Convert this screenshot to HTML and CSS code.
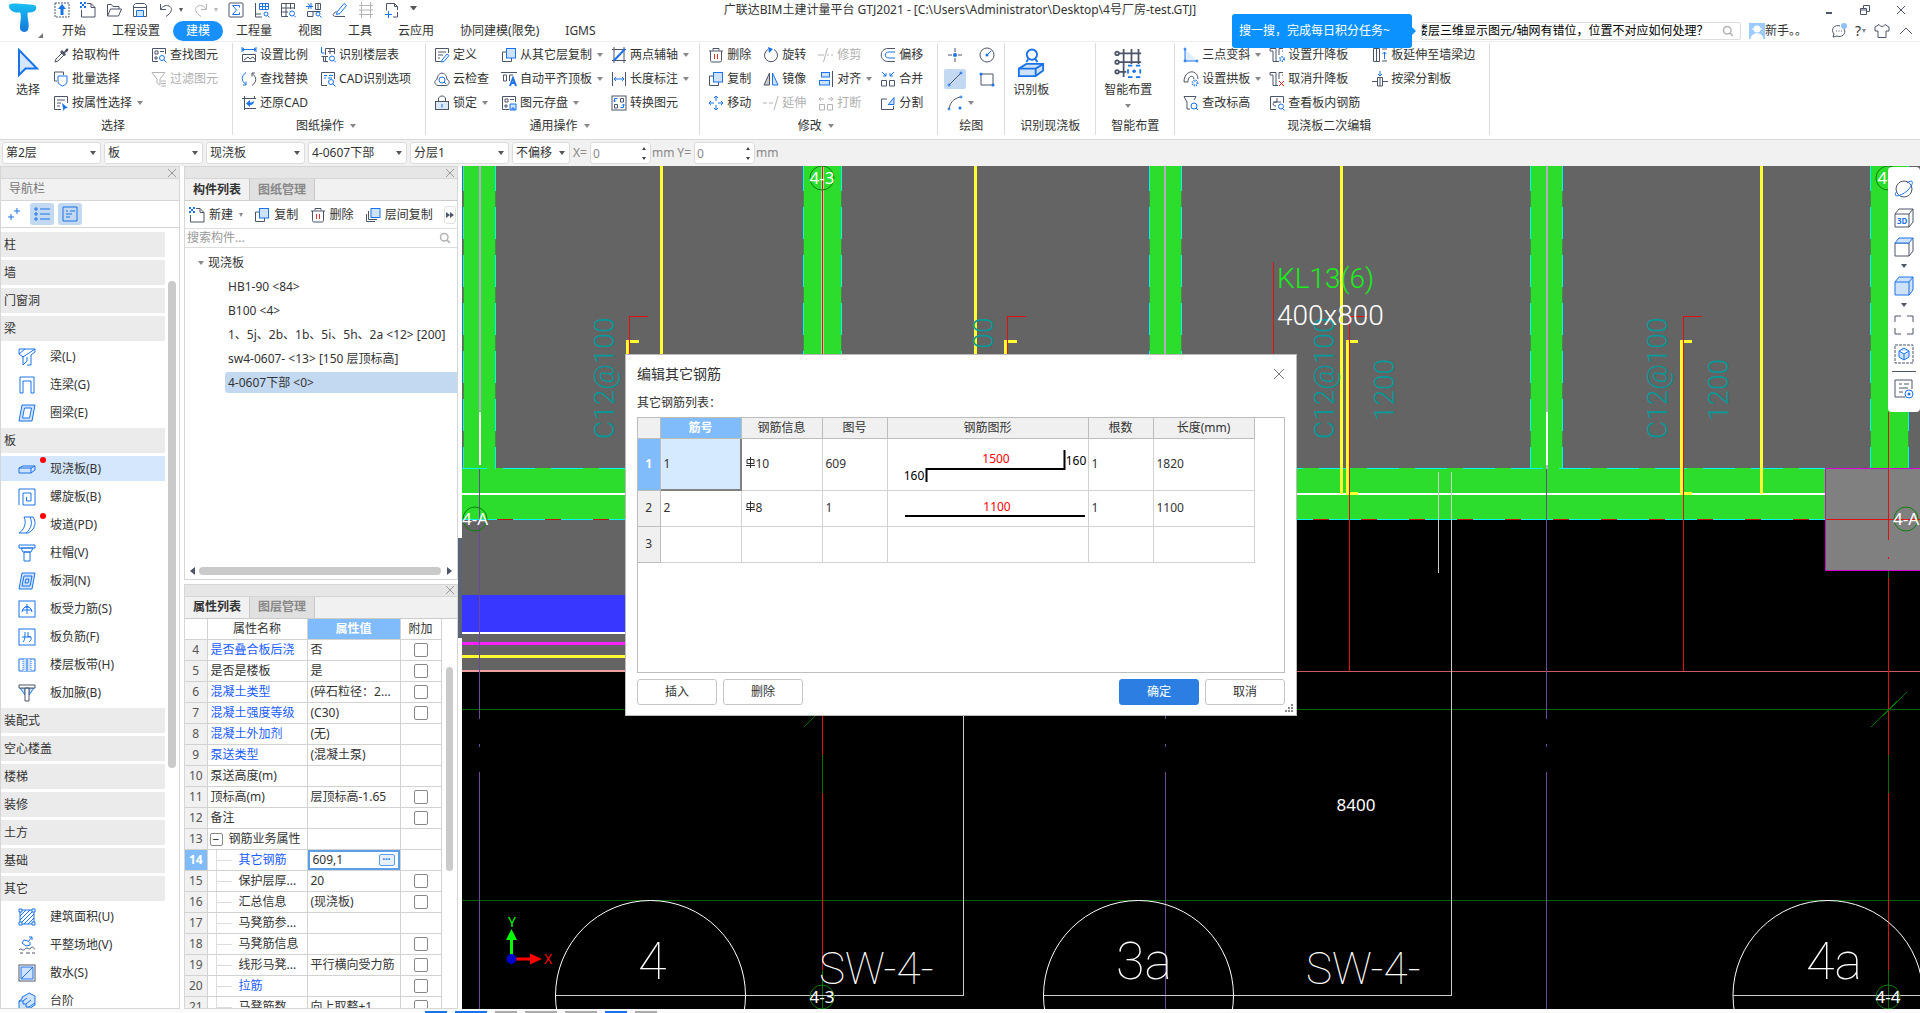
FILE: index.html
```html
<!DOCTYPE html>
<html lang="zh-CN">
<head>
    <meta charset="UTF-8">
    <meta name="viewport" content="width=device-width, initial-scale=1.0">
    <title>广联达BIM土建计量平台 GTJ2021</title>
    <link rel="stylesheet" href="styles.css">
</head>
<body>

<!-- icon sprite -->
<svg class="sprite" aria-hidden="true">
    <symbol id="i-up" viewBox="0 0 16 16"><rect class="k" x="1" y="1" width="14" height="14" stroke-dasharray="2 1"/><path class="bs" d="M8 2l4 5H9.5v6h-3V7H4z"/></symbol>
    <symbol id="i-new" viewBox="0 0 16 16"><path class="k" d="M7 1.5h4l4 4v9.500H1.500V8M11 1.500v4h4"/><path class="bs" d="M0 0h2v2H0zM4 0h2v2H4zM2 2h2v2H2zM0 4h2v2H0zM4 4h2v2H4z"/></symbol>
    <symbol id="i-open" viewBox="0 0 16 16"><path class="k" d="M1.5 14V2.500h4l1.500 2h6V7M1.500 14l3-7h11l-3 7z"/></symbol>
    <symbol id="i-save" viewBox="0 0 16 16"><path class="k" d="M1.5 3.500l2-2h9l2 2v11h-13zM1.500 5.500h13"/><path class="bf" d="M4.5 14.500v-6h7v6z"/></symbol>
    <symbol id="i-undo" viewBox="0 0 16 16"><path class="k" d="M2.5 2v5.500H8M2.500 7.500C5 3.500 9 2.500 12 4.500c2.500 2 2 6-4 10"/></symbol>
    <symbol id="i-redo" viewBox="0 0 16 16"><path class="g" d="M13.5 2v5.500H8M13.500 7.500C11 3.500 7 2.500 4 4.500c-2.500 2-2 6 4 10"/></symbol>
    <symbol id="i-sum" viewBox="0 0 16 16"><rect class="k" x="1" y="1" width="14" height="14" rx="1"/><path class="b" d="M11.5 5.500v-2h-7L8.500 8l-4 4.500h7v-2"/></symbol>
    <symbol id="i-tabq" viewBox="0 0 16 16"><path class="k" d="M1.5 1v14H8M1.500 12H7"/><path class="b" d="M5.5 1.500h9v6h-9zM5.500 4.500h9M8.500 1.500v6M11.500 1.500v6"/><circle class="b" cx="12" cy="12" r="2"/><path class="b" d="M13.5 13.500l2 2"/></symbol>
    <symbol id="i-gridq" viewBox="0 0 16 16"><path class="k" d="M8 14.500H1.500v-13h13V7M1.500 6h13M1.500 10H8M6 1.500v13M10.500 1.500V7"/><circle class="b" cx="12" cy="11.5" r="2.5"/><path class="b" d="M14 13.500l2 2"/></symbol>
    <symbol id="i-floorq" viewBox="0 0 16 16"><path class="k" d="M9.5 1.500h5v6h-5zM1.500 9.500h13M1.500 9.500v5H7v-5M12 1.500v6"/><path class="b" d="M0 4.500h7M2 1.500L4 4 2 7M5 1v6"/><circle class="b" cx="12" cy="12" r="2"/><path class="b" d="M13.5 13.500l2 2"/></symbol>
    <symbol id="i-floor" viewBox="0 0 16 16"><path class="k" d="M5.5 8V1.500h9V7M8 4.500h6.500M10 1.500V7M1.500 9.500H8M3.500 9.500v5H8M5.500 9.500v5"/><path class="b" d="M1.5 0v6h3"/><circle class="b" cx="12" cy="11.5" r="2.5"/><path class="b" d="M14 13.500l2 2"/></symbol>
    <symbol id="i-pen" viewBox="0 0 16 16"><path class="b" d="M5 10l7-8.500 2.500 2L8 11.500 4.500 12.500z"/><path class="k" d="M4.5 9.500C0 12 0 14 4 14.500h9"/></symbol>
    <symbol id="i-frame" viewBox="0 0 16 16"><path class="g" d="M3.5 0v16M12.500 0v16M1 3.500h14M1 8h14M1 12.500h14"/></symbol>
    <symbol id="i-crop" viewBox="0 0 16 16"><path class="k" d="M2.5 1.500h8l3 3V8M2.500 1.500v7M9 15h4.500v-5M10.500 1.500v3h3"/><path class="b" d="M1 12.500h7M4.500 9v7"/></symbol>
    <symbol id="i-pick" viewBox="0 0 16 16"><path class="ks" d="M9 3l2 2 2-3c2-1 3 0 2 2l-3 2 1 2-2 1-4-4z"/><path class="k" d="M9 6l-6 6-1 3 3-1 6-6"/></symbol>
    <symbol id="i-batch" viewBox="0 0 16 16"><path class="k" d="M4 10H1.500v-9h9v3"/><path class="b wf" d="M5 5h9v5c0 3-2 4-4.500 5C7 14 5 13 5 10z"/></symbol>
    <symbol id="i-attr" viewBox="0 0 16 16"><path class="k" d="M8 14.500H1.500v-13h13V8M4 5h8M4 8h4M4 11h3"/><path class="bs" d="M9 8l6 5-3 .5L10.500 16z"/></symbol>
    <symbol id="i-find" viewBox="0 0 16 16"><path class="k" d="M7 14.500H1.500v-13h13V7M4 4h3v3H4zM9 4.500h4M4 10h2v2H4z"/><circle class="b" cx="11" cy="11" r="2.5"/><path class="b" d="M13 13l2.500 2.500"/></symbol>
    <symbol id="i-filter" viewBox="0 0 16 16"><path class="g" d="M1 1.500h13L9 8v6l-3-2V8zM10 10h5M10 12.500h5M10 15h5"/></symbol>
    <symbol id="i-scale" viewBox="0 0 16 16"><path class="b" d="M1 0v5M15 0v5M1 2.500h14M3 1L1 2.500 3 4M13 1l2 1.500L13 4"/><path class="k" d="M1.5 7.500h13v7h-13zM3 13l4-3 2 2 3-2 2.500 3"/></symbol>
    <symbol id="i-cad" viewBox="0 0 16 16"><path class="k" d="M7 14.500H1.500v-13h13V8"/><path class="b" d="M4 4.500h3M9 4.500h4M4 7h2M8 7h4"/><circle class="b" cx="11" cy="11" r="2.5"/><path class="b" d="M13 13l2.500 2.500"/></symbol>
    <symbol id="i-swap" viewBox="0 0 16 16"><path class="b" d="M5 1.500C0 5 0 10 5 13.500M5 14V10.500M5 14H2"/><path class="k" d="M11 14.500c5-3.500 5-8.500 0-12M11 2v3.500M11 2h3"/></symbol>
    <symbol id="i-restore" viewBox="0 0 16 16"><path class="k" d="M1 3.500h14M3.500 1v14M3.500 13.500H15M13.500 1v3"/><path class="bs" d="M5 8.500L9 5v2.500c2 0 3-.5 4-2 0 3-1.500 4.500-4 4.500v2z"/></symbol>
    <symbol id="i-define" viewBox="0 0 16 16"><path class="k" d="M7 14.500H1.500v-13h13V6M4 5h8M4 8h5M4 11h2"/><path class="b" d="M8 13l5-6 2 1.500-5 6-2.500.5z"/></symbol>
    <symbol id="i-cloud" viewBox="0 0 16 16"><path class="k" d="M4 14.500C0 14 0 9 3 8.500 3.500 0 12.500 0 13 8.500c3 .5 3 5.500-1 6z"/><circle class="b" cx="8" cy="9" r="3"/><path class="b" d="M10 11l2 2"/></symbol>
    <symbol id="i-lock" viewBox="0 0 16 16"><path class="k" d="M4.5 7V4c0-4 7-4 7 0v3"/><rect class="k lf" x="1.5" y="6.5" width="13" height="8"/><path class="b" d="M8 9v3.500"/></symbol>
    <symbol id="i-copy" viewBox="0 0 16 16"><path class="k" d="M5 5H1.500v9.500h9V11"/><rect class="bf" x="5.5" y="1.5" width="9" height="9.5"/></symbol>
    <symbol id="i-layers" viewBox="0 0 16 16"><path class="k" d="M1.5 7v7.500H10M3.500 4v8.500H12"/><rect class="bf" x="6" y="1.5" width="9" height="9"/></symbol>
    <symbol id="i-top" viewBox="0 0 16 16"><path class="k" d="M0 1.500h16M2.500 4v6h3V4zM12 4H8.500v6"/><path class="b thick" d="M9 15l3-8 3 8M10 12h4"/></symbol>
    <symbol id="i-store" viewBox="0 0 16 16"><path class="k" d="M8 14.500H1.500v-13h13V7M4 4h3v3H4zM9 4.500h4M4 10h2v2H4z"/><path class="bf" d="M9 9h6v6H9zM11 15v-2h2v2"/></symbol>
    <symbol id="i-axis" viewBox="0 0 16 16"><path class="k" d="M1 2.500h14M1 13.500h14M3 0v16M13 0v16"/><path class="b thick" d="M3 13.500L14 2"/></symbol>
    <symbol id="i-dim" viewBox="0 0 16 16"><path class="k" d="M1.5 1v14M14.500 1v14"/><path class="b" d="M3 8h10M5 6L3 8l2 2M11 6l2 2-2 2"/></symbol>
    <symbol id="i-conv" viewBox="0 0 16 16"><rect class="k" x="1" y="1" width="14" height="14"/><path class="k" d="M9.5 3.500h3V7h-3zM3.500 9.500h3V13h-3z"/><path class="b" d="M6.5 3.500h-3v3M2.500 5.500l1 1.500 1.500-1.500M9.500 12.500h3v-3M11 10.500l1.500-1.500L14 10.500"/></symbol>
    <symbol id="i-del" viewBox="0 0 16 16"><path class="k" d="M1 4h14M5 3.500V1.500h6v2M2.500 4v9.500c0 1 .5 1.500 1.500 1.500h8c1 0 1.500-.5 1.500-1.500V4"/><path d="M6.5 7v5M9.500 7v5" fill="none" stroke="#d33"/></symbol>
    <symbol id="i-rot" viewBox="0 0 16 16"><path class="k" d="M11 2.500A6.500 6.500 0 1 1 5 2.500"/><path class="bs" d="M5 0l5 2-4 4z"/></symbol>
    <symbol id="i-mirror" viewBox="0 0 16 16"><path class="k" d="M6.5 2v12H1z" style="fill:#ccc"/><path class="bf" d="M9.5 2v12H15z"/></symbol>
    <symbol id="i-trim" viewBox="0 0 16 16"><path class="g" d="M0 8h6M9 8h2M13 8h2M9.500 1l-4 14"/></symbol>
    <symbol id="i-extend" viewBox="0 0 16 16"><path class="g" d="M0 8h4M6 8h4M15 1l-4 14"/></symbol>
    <symbol id="i-offset" viewBox="0 0 16 16"><path class="k" d="M15 1.500H8C-1 1.500-1 14.500 8 14.500h7"/><path class="b" d="M15 5H9C4 5 4 11 9 11h6"/></symbol>
    <symbol id="i-align" viewBox="0 0 16 16"><path class="k" d="M14.5 0v16"/><rect class="bf" x="3.5" y="1.5" width="8" height="4.5"/><rect class="bf" x="1.5" y="9.5" width="10" height="4.5"/></symbol>
    <symbol id="i-merge" viewBox="0 0 16 16"><path class="k" d="M1.5 9.500h5V15h-5zM9.500 9.500h5V15h-5z"/><path class="b" d="M2 1l4 4M3 5h3V2M14 1l-4 4M13 5h-3V2"/></symbol>
    <symbol id="i-break" viewBox="0 0 16 16"><path class="g" d="M1.5 9.500h5V15h-5zM9.500 9.500h5V15h-5zM1 4h5M3 2L1 4l2 2M15 4h-5M13 2l2 2-2 2"/></symbol>
    <symbol id="i-move" viewBox="0 0 16 16"><path class="b" d="M8 1v5M8 10v5M1 8h5M10 8h5M6 3l2-2 2 2M6 13l2 2 2-2M3 6L1 8l2 2M13 6l2 2-2 2"/></symbol>
    <symbol id="i-split" viewBox="0 0 16 16"><path class="k" d="M7 4H1.500v10.500h12V11"/><path class="bf" d="M8 10l6-7.500v7H8.500z"/></symbol>
    <symbol id="i-point" viewBox="0 0 16 16"><path class="k" d="M8 1v4M8 11v4M1 8h4M11 8h4"/><circle class="bs" cx="8" cy="8" r="2"/></symbol>
    <symbol id="i-circle" viewBox="0 0 16 16"><circle class="k" cx="8" cy="8" r="7"/><path class="b" d="M8 8l4-4"/><circle class="bs" cx="8" cy="8" r="1.5"/></symbol>
    <symbol id="i-line" viewBox="0 0 16 16"><path class="k" d="M2 14L14 2"/><circle class="b" cx="2" cy="14" r="1"/><circle class="b" cx="14" cy="2" r="1"/></symbol>
    <symbol id="i-rect" viewBox="0 0 16 16"><path class="k" d="M2 3h12v11H2z"/><circle class="bs" cx="2" cy="3" r="1.5"/><circle class="bs" cx="14" cy="14" r="1.5"/></symbol>
    <symbol id="i-arc" viewBox="0 0 16 16"><path class="k" d="M2 14C3 8 6 4 13 2"/><circle class="b" cx="2" cy="14" r="1"/><circle class="b" cx="14" cy="2" r="1"/><circle class="bs" cx="13" cy="13" r="1.5"/></symbol>
    <symbol id="i-slab" viewBox="0 0 30 32"><path d="M2 22l8-5h18v7l-8 6H2zM2 22h18v8M20 22l8-5" fill="#cfe2fb" stroke="#1a73e8" stroke-width="2"/><circle cx="16" cy="7" r="5.5" fill="none" stroke="#1a73e8" stroke-width="2"/><path d="M12 12l-2 3M19 11l3 4" stroke="#1a73e8" stroke-width="2"/></symbol>
    <symbol id="i-smart" viewBox="0 0 32 34"><path d="M4 6h27M4 16h27M4 27h10M11 1v32M20 1v17M28 1v17" fill="none" stroke="#4c5468" stroke-width="2"/><g fill="#fff" stroke="#4c5468" stroke-width="2"><circle cx="3.5" cy="6" r="2"/><circle cx="3.5" cy="16" r="2"/><circle cx="3.5" cy="27" r="2"/></g><rect x="16" y="20" width="14" height="13" fill="#fff" stroke="#1a73e8" stroke-width="2" stroke-dasharray="5 4"/><circle cx="23" cy="26.5" r="2" fill="#1a73e8"/></symbol>
    <symbol id="i-cursor" viewBox="0 0 24 30"><path d="M3 2v25l6.500-6.500H21z" fill="#d5e6fb" stroke="#1a73e8" stroke-width="2"/></symbol>
    <symbol id="i-slope" viewBox="0 0 16 16"><path d="M2 2v12h12z" fill="#e0edfc"/><path class="b" d="M2 2v12h12"/><circle class="b" cx="2" cy="2" r="1"/><circle class="b" cx="2" cy="14" r="1"/><circle class="b" cx="14" cy="14" r="1"/></symbol>
    <symbol id="i-arch" viewBox="0 0 16 16"><path class="k" d="M1 11C1-2 15-2 15 8M5 11c0-7 6-7 6-3M1 11h4"/><circle class="b thick" cx="12" cy="12" r="2.5" stroke-dasharray="1 1"/></symbol>
    <symbol id="i-elev" viewBox="0 0 16 16"><path class="k" d="M1 1.500h12L11 5M1 1.500L4 7v7h3"/><circle class="b" cx="11" cy="11" r="3"/><path class="b" d="M13 13l2 2"/></symbol>
    <symbol id="i-lift" viewBox="0 0 16 16"><path class="k" d="M1 1.500h6v13M4 4v10.500h6M1 1.500V4h3M14 1.500h-4V8M14 4h-1"/><circle class="b thick" cx="13" cy="12" r="2" stroke-dasharray="1 1"/></symbol>
    <symbol id="i-unlift" viewBox="0 0 16 16"><path class="k" d="M1 1.500h6v13M4 4v10.500h5M1 1.500V4h3M14 1.500h-4V8M14 4h-1"/><path d="M10 10l5 5M15 10l-5 5" stroke="#d22"/></symbol>
    <symbol id="i-rebar" viewBox="0 0 16 16"><path class="k" d="M7 14.500H1.500v-13h13V8M8 3v4M4 7h8M8 7c-5 0-5 4-1 4"/><circle class="b" cx="12" cy="11.5" r="2.5"/><path class="b" d="M13.5 13.500l2 2"/></symbol>
    <symbol id="i-reach" viewBox="0 0 16 16"><path class="k" d="M1.5 1.500h6v13h-6zM4.500 1.500v13M10 2h5M10 14h5"/><path class="b" d="M12.5 5v7M10.500 7l2-2 2 2"/></symbol>
    <symbol id="i-cut" viewBox="0 0 16 16"><path class="b" d="M8 0v5M6 3l2 2 2-2"/><path class="k" d="M5.5 6.500h5V15h-5zM8 6.500V15M0 10.500h5M11 10.500h5"/></symbol>
    <symbol id="i-mag" viewBox="0 0 16 16"><circle class="g thick" cx="7" cy="7" r="5"/><path class="g thick" d="M10.500 10.500l4 4"/></symbol>
    <symbol id="i-chat" viewBox="0 0 16 16"><path class="k" d="M13 6c3 5-3 9-7 7l-4 1 1-3C-1 6 4 1 9 3M5 8h1M7.500 8h1M10 8h1"/><circle cx="13" cy="3" r="3" fill="#8fc0fa"/></symbol>
    <symbol id="i-shirt" viewBox="0 0 16 16"><path class="k" d="M5 1.500L1 4v4h3v6.500h8V8h3V4l-4-2.500C10 4 6 4 5 1.500z"/></symbol>
    <symbol id="i-x" viewBox="0 0 12 12"><path d="M2 2l8 8M10 2l-8 8" fill="none" stroke="#999"/></symbol>
    <symbol id="i-list" viewBox="0 0 16 16"><path class="b" d="M6 3h10M6 8h10M6 13h10M1 2h2v2H1zM1 7h2v2H1zM1 12h2v2H1z"/></symbol>
    <symbol id="i-card" viewBox="0 0 16 16"><path class="b" d="M1 1h14v14H1zM4 5h2M8 5h5M4 8h6M4 11h4"/></symbol>
    <symbol id="i-plus" viewBox="0 0 16 16"><path class="b" d="M11 2v6M8 5h6M5 8v6M2 11h6"/></symbol>
    <!-- navigation icons -->
    <symbol id="n-beam" viewBox="0 0 18 18"><path class="b" d="M1 1h16v3l-4 3v10H9M1 1v5l4 3M5 8v9l4-4V9M1 6l6-5M5 9l12-8"/></symbol>
    <symbol id="n-link" viewBox="0 0 18 18"><path class="b" d="M2 17V1h14v16h-3V5H5v12z"/></symbol>
    <symbol id="n-ring" viewBox="0 0 18 18"><path class="bf" d="M4 1h13l-3 16H1z"/><path class="b wf" d="M6.5 4h7l-2 10h-7z"/></symbol>
    <symbol id="n-slab" viewBox="0 0 18 18"><path class="bf" d="M1 8l4-2h12v4l-4 3H1zM1 8h12v5M13 8l4-2"/></symbol>
    <symbol id="n-spiral" viewBox="0 0 18 18"><path class="b" d="M1 17V1h16v16H5V5h8v8H8.500V9"/></symbol>
    <symbol id="n-ramp" viewBox="0 0 18 18"><path class="b" d="M6 1c3 6 0 13-5 16h9c7-3 9-11 5-16zM12 1c3 6 1 12-4 16"/></symbol>
    <symbol id="n-cap" viewBox="0 0 18 18"><path class="b" d="M1 1h16v3H1zM3 4h12l-2 4H5zM6 8h6v9H6z"/></symbol>
    <symbol id="n-hole" viewBox="0 0 18 18"><path class="bf" d="M4 1h13l-3 16H1z"/><path class="b" d="M6 4h8l-2 10H4zM8 7h3l-1 4H7z"/></symbol>
    <symbol id="n-force" viewBox="0 0 18 18"><rect class="b" x="1" y="1" width="16" height="16"/><path class="b" d="M4 12c1-7 9-7 10 0M4 10h10M9 4v10M7 7h4"/></symbol>
    <symbol id="n-neg" viewBox="0 0 18 18"><rect class="b" x="1" y="1" width="16" height="16"/><path class="b" d="M4 9h9M7 4v3c0 4-1 6-2 7M10 4v5c3-2 5 2 1 5"/></symbol>
    <symbol id="n-band" viewBox="0 0 18 18"><path class="b" d="M1 3h16v12H1z"/><path d="M5 3h8v12H5z" fill="#cfe2fb"/><path class="b" d="M5 3v12M13 3v12" stroke-dasharray="1 1"/><path class="b" d="M9 3v12"/></symbol>
    <symbol id="n-haunch" viewBox="0 0 18 18"><path class="bf" d="M2 4l5 7V4zM16 4l-5 7V4z"/><path class="k wf" d="M1 1h16v3H1zM7 4h4v13H7z"/></symbol>
    <symbol id="n-area" viewBox="0 0 18 18"><path class="b" d="M2 2h14v14H2zM2 8l6-6M2 12L12 2M2 16L16 2M6 16L16 6M10 16l6-6"/><path class="b wf" d="M1 1h3v3H1zM14 1h3v3h-3zM1 14h3v3H1zM14 14h3v3h-3z"/></symbol>
    <symbol id="n-level" viewBox="0 0 18 18"><path class="b" d="M14 1l-4 5M11 1h3v3M10 5L6 4 4 7l4 3 4-1V6"/><path class="k" d="M1 14c2-3 4 2 6-1s4 2 6-1 2 1 4 1M2 17h3M8 17h4M14 17h3"/></symbol>
    <symbol id="n-apron" viewBox="0 0 18 18"><rect class="k" x="1" y="1" width="16" height="16"/><path class="bf" d="M3 3h12v12H3z"/><path class="b" d="M3 15L15 3"/></symbol>
    <symbol id="n-step" viewBox="0 0 18 18"><path class="bf" d="M1 9l3-2V5l4-2 3-2 6 3v9l-6 4H1z"/><path class="b" d="M1 9h4v3h3v3h3v2M5 9l4-3M8 12l5-4M11 15l6-4"/></symbol>
    <!-- view icons -->
    <symbol id="v-orbit" viewBox="0 0 20 20"><circle class="k" cx="10" cy="10" r="8"/><path class="b" d="M3 12c-6 8 5 5 11-1s6-12-1-7"/></symbol>
    <symbol id="v-box" viewBox="0 0 20 20"><path class="k" d="M1 6h14v13H1zM1 6l4-5h14l-4 5M19 1v13l-4 5"/></symbol>
    <symbol id="v-boxtop" viewBox="0 0 20 20"><path class="k" d="M1 6h14v13H1zM19 1v13l-4 5"/><path class="bf" d="M1 6l4-5h14l-4 5z"/></symbol>
    <symbol id="v-boxfill" viewBox="0 0 20 20"><path class="bf" d="M1 6l4-5h14v13l-4 5H1zM1 6h14v13M15 6l4-5"/></symbol>
    <symbol id="v-full" viewBox="0 0 20 20"><path class="k" d="M1 7V1h6M13 1h6v6M19 13v6h-6M7 19H1v-6"/></symbol>
    <symbol id="v-local" viewBox="0 0 20 20"><rect class="k" x="1" y="1" width="18" height="18" stroke-dasharray="3 1"/><path class="bf" d="M10 4l5 3v6l-5 3-5-3V7zM5 7l5 3 5-3M10 10v6"/></symbol>
    <symbol id="v-set" viewBox="0 0 20 20"><path class="k" d="M11 18H1V1h17v9M5 5h3M10 5h5M5 9h9M5 13h4"/><circle class="b" cx="15" cy="15" r="4"/><circle class="bs" cx="15" cy="15" r="1.5"/></symbol>
</svg>

<header class="header">
    <div class="logo">
        <svg viewBox="0 0 32 32"><defs><linearGradient id="lg" x1="0" y1="0" x2="0" y2="1"><stop offset="0" stop-color="#19c0f5"/><stop offset="1" stop-color="#1677d8"/></linearGradient></defs><path d="M1 4C0 0 5 0 16 1s15 0 14 5c-1 4-6 4-9 4-1 6 3 14 0 19-2 3-7 2-8-1-1-6 2-12 0-18C8 11 2 9 1 4z" fill="url(#lg)"/></svg>
        <i class="corner"></i>
    </div>
    <div class="titlebar">
        <div class="quick">
            <button title="上传"><svg><use href="#i-up"/></svg></button>
            <button title="新建"><svg><use href="#i-new"/></svg></button>
            <button title="打开"><svg><use href="#i-open"/></svg></button>
            <button title="保存"><svg><use href="#i-save"/></svg></button>
            <button title="撤销"><svg><use href="#i-undo"/></svg></button><i class="caret pull"></i>
            <button title="恢复"><svg><use href="#i-redo"/></svg></button><i class="caret pull light"></i>
            <button title="汇总计算"><svg><use href="#i-sum"/></svg></button>
            <button title="查看工程量"><svg><use href="#i-tabq"/></svg></button>
            <button title="查看报表"><svg><use href="#i-gridq"/></svg></button>
            <button title="查看计算式"><svg><use href="#i-floorq"/></svg></button>
            <button title="编辑"><svg><use href="#i-pen"/></svg></button>
            <button title="钢筋"><svg><use href="#i-frame"/></svg></button>
            <button title="裁剪"><svg><use href="#i-crop"/></svg></button>
            <i class="caret bar"></i>
        </div>
        <h1 class="title">广联达BIM土建计量平台 GTJ2021 - [C:\Users\Administrator\Desktop\4号厂房-test.GTJ]</h1>
        <div class="win">
            <button title="最小化"><svg viewBox="0 0 12 12"><path class="k thick" d="M3 9h6"/></svg></button>
            <button title="还原"><svg viewBox="0 0 12 12"><path class="k" d="M1.5 4.500h6v6h-6zM4.500 4V1.500h6v6H8M1.500 6h6"/></svg></button>
            <button title="关闭"><svg viewBox="0 0 12 12"><path class="k" d="M2 2l8 8M10 2l-8 8"/></svg></button>
        </div>
    </div>
    <nav class="tabs">
        <a href="#">开始</a><a href="#">工程设置</a><a href="#" class="on">建模</a><a href="#">工程量</a><a href="#">视图</a><a href="#">工具</a><a href="#">云应用</a><a href="#">协同建模(限免)</a><a href="#">IGMS</a>
        <div class="account">
            <div class="ask">
                <div class="bubble">搜一搜，完成每日积分任务~</div>
                <input type="text" aria-label="搜一搜" value="楼层三维显示图元/轴网有错位，位置不对应如何处理？">
                <svg class="mag"><use href="#i-mag"/></svg>
            </div>
            <a href="#" class="user"><svg viewBox="0 0 16 16"><path d="M0 0h16v16H0z" fill="#9ccbff"/><circle cx="8" cy="6" r="3.5" fill="#fff"/><path d="M3 6h10M2 16c0-7 12-7 12 0z" fill="#fff" stroke="#fff"/></svg>新手。。</a>
            <button title="消息"><svg><use href="#i-chat"/></svg></button>
            <button title="帮助" class="help">?<i class="caret"></i></button>
            <button title="皮肤"><svg><use href="#i-shirt"/></svg></button>
            <button title="收起"><svg viewBox="0 0 16 16"><path class="k" d="M2 11l6-6 6 6"/></svg></button>
        </div>
    </nav>
</header>

<div class="ribbon">
    <section class="group">
        <div class="tools">
            <button class="big narrow"><svg><use href="#i-cursor"/></svg>选择</button>
            <div class="grid">
                <button><svg><use href="#i-pick"/></svg>拾取构件</button>
                <button><svg><use href="#i-batch"/></svg>批量选择</button>
                <button><svg><use href="#i-attr"/></svg>按属性选择<i class="caret"></i></button>
                <button><svg><use href="#i-find"/></svg>查找图元</button>
                <button disabled><svg><use href="#i-filter"/></svg>过滤图元</button>
            </div>
        </div>
        <div class="name">选择</div>
    </section>
    <section class="group">
        <div class="grid">
            <button><svg><use href="#i-scale"/></svg>设置比例</button>
            <button><svg><use href="#i-swap"/></svg>查找替换</button>
            <button><svg><use href="#i-restore"/></svg>还原CAD</button>
            <button><svg><use href="#i-floor"/></svg>识别楼层表</button>
            <button><svg><use href="#i-cad"/></svg>CAD识别选项</button>
        </div>
        <div class="name">图纸操作<i class="caret"></i></div>
    </section>
    <section class="group">
        <div class="grid">
            <button><svg><use href="#i-define"/></svg>定义</button>
            <button><svg><use href="#i-cloud"/></svg>云检查</button>
            <button><svg><use href="#i-lock"/></svg>锁定<i class="caret"></i></button>
            <button><svg><use href="#i-copy"/></svg>从其它层复制<i class="caret"></i></button>
            <button><svg><use href="#i-top"/></svg>自动平齐顶板<i class="caret"></i></button>
            <button><svg><use href="#i-store"/></svg>图元存盘<i class="caret"></i></button>
            <button><svg><use href="#i-axis"/></svg>两点辅轴<i class="caret"></i></button>
            <button><svg><use href="#i-dim"/></svg>长度标注<i class="caret"></i></button>
            <button><svg><use href="#i-conv"/></svg>转换图元</button>
        </div>
        <div class="name">通用操作<i class="caret"></i></div>
    </section>
    <section class="group">
        <div class="grid">
            <button><svg><use href="#i-del"/></svg>删除</button>
            <button><svg><use href="#i-copy"/></svg>复制</button>
            <button><svg><use href="#i-move"/></svg>移动</button>
            <button><svg><use href="#i-rot"/></svg>旋转</button>
            <button><svg><use href="#i-mirror"/></svg>镜像</button>
            <button disabled><svg><use href="#i-extend"/></svg>延伸</button>
            <button disabled><svg><use href="#i-trim"/></svg>修剪</button>
            <button><svg><use href="#i-align"/></svg>对齐<i class="caret"></i></button>
            <button disabled><svg><use href="#i-break"/></svg>打断</button>
            <button><svg><use href="#i-offset"/></svg>偏移</button>
            <button><svg><use href="#i-merge"/></svg>合并</button>
            <button><svg><use href="#i-split"/></svg>分割</button>
        </div>
        <div class="name">修改<i class="caret"></i></div>
    </section>
    <section class="group draw">
        <div class="grid">
            <button title="点"><svg><use href="#i-point"/></svg></button>
            <button title="直线" class="on"><svg><use href="#i-line"/></svg></button>
            <button title="弧"><svg><use href="#i-arc"/></svg><i class="caret"></i></button>
            <button title="圆"><svg><use href="#i-circle"/></svg></button>
            <button title="矩形"><svg><use href="#i-rect"/></svg></button>
        </div>
        <div class="name">绘图</div>
    </section>
    <section class="group wide">
        <div class="tools"><button class="big"><svg><use href="#i-slab"/></svg>识别板</button></div>
        <div class="name">识别现浇板</div>
    </section>
    <section class="group wide">
        <div class="tools"><button class="big"><svg><use href="#i-smart"/></svg>智能布置<i class="caret"></i></button></div>
        <div class="name">智能布置</div>
    </section>
    <section class="group">
        <div class="grid">
            <button><svg><use href="#i-slope"/></svg>三点变斜<i class="caret"></i></button>
            <button><svg><use href="#i-arch"/></svg>设置拱板<i class="caret"></i></button>
            <button><svg><use href="#i-elev"/></svg>查改标高</button>
            <button><svg><use href="#i-lift"/></svg>设置升降板</button>
            <button><svg><use href="#i-unlift"/></svg>取消升降板</button>
            <button><svg><use href="#i-rebar"/></svg>查看板内钢筋</button>
            <button><svg><use href="#i-reach"/></svg>板延伸至墙梁边</button>
            <button><svg><use href="#i-cut"/></svg>按梁分割板</button>
        </div>
        <div class="name">现浇板二次编辑</div>
    </section>
</div>

<div class="options">
    <select aria-label="楼层"><option>第2层</option></select>
    <select aria-label="构件大类"><option>板</option></select>
    <select aria-label="构件类型"><option>现浇板</option></select>
    <select aria-label="构件"><option>4-0607下部</option></select>
    <select aria-label="分层"><option>分层1</option></select>
    <select aria-label="偏移" class="short"><option>不偏移</option></select>
    <label>X=<span class="spin"><input type="text" value="0" disabled></span>mm</label>
    <label>Y=<span class="spin"><input type="text" value="0" disabled></span>mm</label>
</div>

<main class="main">
    <aside class="panel nav">
        <div class="strip"><button title="关闭"><svg><use href="#i-x"/></svg></button></div>
        <h2>导航栏</h2>
        <div class="navbar">
            <button title="添加"><svg><use href="#i-plus"/></svg></button>
            <button title="列表" class="on"><svg><use href="#i-list"/></svg></button>
            <button title="卡片" class="on"><svg><use href="#i-card"/></svg></button>
        </div>
        <div class="scroll">
            <ul class="menu">
                <li class="cat">柱</li>
                <li class="cat">墙</li>
                <li class="cat">门窗洞</li>
                <li class="cat">梁</li>
                <li><a href="#"><svg><use href="#n-beam"/></svg>梁(L)</a></li>
                <li><a href="#"><svg><use href="#n-link"/></svg>连梁(G)</a></li>
                <li><a href="#"><svg><use href="#n-ring"/></svg>圈梁(E)</a></li>
                <li class="cat">板</li>
                <li><a href="#" class="on dot"><svg><use href="#n-slab"/></svg>现浇板(B)</a></li>
                <li><a href="#"><svg><use href="#n-spiral"/></svg>螺旋板(B)</a></li>
                <li><a href="#" class="dot"><svg><use href="#n-ramp"/></svg>坡道(PD)</a></li>
                <li><a href="#"><svg><use href="#n-cap"/></svg>柱帽(V)</a></li>
                <li><a href="#"><svg><use href="#n-hole"/></svg>板洞(N)</a></li>
                <li><a href="#"><svg><use href="#n-force"/></svg>板受力筋(S)</a></li>
                <li><a href="#"><svg><use href="#n-neg"/></svg>板负筋(F)</a></li>
                <li><a href="#"><svg><use href="#n-band"/></svg>楼层板带(H)</a></li>
                <li><a href="#"><svg><use href="#n-haunch"/></svg>板加腋(B)</a></li>
                <li class="cat">装配式</li>
                <li class="cat">空心楼盖</li>
                <li class="cat">楼梯</li>
                <li class="cat">装修</li>
                <li class="cat">土方</li>
                <li class="cat">基础</li>
                <li class="cat">其它</li>
                <li><a href="#"><svg><use href="#n-area"/></svg>建筑面积(U)</a></li>
                <li><a href="#"><svg><use href="#n-level"/></svg>平整场地(V)</a></li>
                <li><a href="#"><svg><use href="#n-apron"/></svg>散水(S)</a></li>
                <li><a href="#"><svg><use href="#n-step"/></svg>台阶</a></li>
            </ul>
            <div class="vbar"><i></i></div>
        </div>
    </aside>

    <div class="middle">
        <section class="panel comps">
            <div class="strip"><button title="关闭"><svg><use href="#i-x"/></svg></button></div>
            <div class="ptabs"><button class="on">构件列表</button><button>图纸管理</button></div>
            <div class="ptools">
                <button><svg><use href="#i-new"/></svg>新建<i class="caret"></i></button>
                <button><svg><use href="#i-copy"/></svg>复制</button>
                <button><svg><use href="#i-del"/></svg>删除</button>
                <button><svg><use href="#i-layers"/></svg>层间复制</button>
                <button title="更多" class="more"><svg viewBox="0 0 8 6"><path d="M0 0l4 3-4 3zM4 0l4 3-4 3z" fill="#4c5468"/></svg></button>
            </div>
            <div class="psearch"><input type="text" aria-label="搜索构件" placeholder="搜索构件..."><svg><use href="#i-mag"/></svg></div>
            <div class="tree">
                <div class="root"><i class="caret"></i>现浇板</div>
                <ul>
                    <li>HB1-90 &lt;84&gt;</li>
                    <li>B100 &lt;4&gt;</li>
                    <li>1、5j、2b、1b、5i、5h、2a &lt;12&gt; [200]</li>
                    <li>sw4-0607- &lt;13&gt; [150 层顶标高]</li>
                    <li class="on">4-0607下部 &lt;0&gt;</li>
                </ul>
            </div>
            <div class="hbar"><b class="l"></b><i></i><b class="r"></b></div>
        </section>

        <section class="panel props">
            <div class="strip"><button title="关闭"><svg><use href="#i-x"/></svg></button></div>
            <div class="ptabs"><button class="on">属性列表</button><button>图层管理</button></div>
            <div class="scroll">
                <table class="ptable">
                    <colgroup><col class="c-no"><col class="c-name"><col class="c-val"><col class="c-add"></colgroup>
                    <thead><tr><th></th><th>属性名称</th><th class="on">属性值</th><th>附加</th></tr></thead>
                    <tbody>
                        <tr><th>4</th><td class="link">是否叠合板后浇</td><td>否</td><td><input type="checkbox" aria-label="附加 4"></td></tr>
                        <tr><th>5</th><td>是否是楼板</td><td>是</td><td><input type="checkbox" aria-label="附加 5"></td></tr>
                        <tr><th>6</th><td class="link">混凝土类型</td><td>(碎石粒径：2...</td><td><input type="checkbox" aria-label="附加 6"></td></tr>
                        <tr><th>7</th><td class="link">混凝土强度等级</td><td>(C30)</td><td><input type="checkbox" aria-label="附加 7"></td></tr>
                        <tr><th>8</th><td class="link">混凝土外加剂</td><td>(无)</td><td></td></tr>
                        <tr><th>9</th><td class="link">泵送类型</td><td>(混凝土泵)</td><td></td></tr>
                        <tr><th>10</th><td>泵送高度(m)</td><td></td><td></td></tr>
                        <tr><th>11</th><td>顶标高(m)</td><td>层顶标高-1.65</td><td><input type="checkbox" aria-label="附加 11"></td></tr>
                        <tr><th>12</th><td>备注</td><td></td><td><input type="checkbox" aria-label="附加 12"></td></tr>
                        <tr><th>13</th><td class="fold"><button title="折叠">−</button>钢筋业务属性</td><td></td><td></td></tr>
                        <tr class="on"><th>14</th><td class="sub link">其它钢筋</td><td class="edit"><div><input type="text" aria-label="其它钢筋" value="609,1"><button title="编辑">•••</button></div></td><td></td></tr>
                        <tr><th>15</th><td class="sub">保护层厚...</td><td>20</td><td><input type="checkbox" aria-label="附加 15"></td></tr>
                        <tr><th>16</th><td class="sub">汇总信息</td><td>(现浇板)</td><td><input type="checkbox" aria-label="附加 16"></td></tr>
                        <tr><th>17</th><td class="sub">马凳筋参...</td><td></td><td></td></tr>
                        <tr><th>18</th><td class="sub">马凳筋信息</td><td></td><td><input type="checkbox" aria-label="附加 18"></td></tr>
                        <tr><th>19</th><td class="sub">线形马凳...</td><td>平行横向受力筋</td><td><input type="checkbox" aria-label="附加 19"></td></tr>
                        <tr><th>20</th><td class="sub link">拉筋</td><td></td><td><input type="checkbox" aria-label="附加 20"></td></tr>
                        <tr><th>21</th><td class="sub">马凳筋数...</td><td>向上取整+1</td><td><input type="checkbox" aria-label="附加 21"></td></tr>
                    </tbody>
                </table>
                <div class="vbar"><i></i></div>
            </div>
        </section>
    </div>

    <div class="splitter"><button title="收起"></button></div>

    <div class="stage">
        <svg class="cad" viewBox="462 166 1458 843" preserveAspectRatio="xMinYMin slice" shape-rendering="crispEdges">
            <rect x="462" y="166" width="1458" height="843" fill="#000"/>
            <rect x="462" y="166" width="1458" height="354" fill="#646464"/>
            <rect x="462" y="520" width="500" height="152" fill="#646464"/>
            <!-- beams -->
            <g fill="#2cdd2c">
                <rect x="464" y="166" width="32" height="303"/>
                <rect x="803" y="166" width="39" height="303"/>
                <rect x="1149" y="166" width="32" height="303"/>
                <rect x="1530" y="166" width="32" height="303"/>
                <rect x="1870" y="166" width="38" height="303"/>
                <rect x="462" y="469" width="1363" height="51"/>
            </g>
            <g stroke="#3f8f4f" fill="none">
                <path d="M463.5 166v303M495.500 166v303M803.500 166v303M841.500 166v303M1149.500 166v303M1181.500 166v303M1530.500 166v303M1562.500 166v303M1870.500 166v303M1908.500 166v303"/>
                <path d="M462 468.500H1825" stroke="#2cdd2c"/>
            </g>
            <g stroke="#00f5f5" fill="none" stroke-dasharray="32 16" stroke-dashoffset="7">
                <path d="M463.5 166v303M495.500 166v303M803.500 166v303M841.500 166v303M1149.500 166v303M1181.500 166v303M1530.500 166v303M1562.500 166v303M1870.500 166v303M1908.500 166v303M462 468.500H1825"/>
            </g>
            <path d="M462 519.500H1825" stroke="#00f5f5"/>
            <path d="M497 519.500H1825" stroke="#c01010" stroke-dasharray="16 32"/>
            <path d="M462 494H1825" stroke="#fff" stroke-width="2"/>
            <!-- slab layers at the left -->
            <rect x="462" y="595" width="500" height="37" fill="#3737ff"/>
            <path d="M462 633h500" stroke="#fff" stroke-width="2"/>
            <path d="M462 643.500h500" stroke="#ff20ff" stroke-width="3"/>
            <path d="M462 656.500h500" stroke="#ffff32" stroke-width="3"/>
            <path d="M462 671h163" stroke="#f0a0a0" stroke-width="2"/>
            <path d="M1297 671.500h623" stroke="#cc5c5c"/>
            <path d="M462 709.500h1458M462 900.500h1458" stroke="#006400"/>
            <!-- axes -->
            <g fill="none">
                <path d="M479.5 166v245M1164.500 166v245M1546.500 166v303" stroke="#b9a9c9" stroke-width="2"/>
                <path d="M479.5 412v53M1546.500 412v53" stroke="#fff" stroke-width="2"/>
                <path d="M479.5 469v250M479.500 744v3M479.500 772v237M1165.500 716v3M1165.500 744v3M1165.500 772v237M1546.500 469v250M1546.500 744v3M1546.500 772v237" stroke="#6a4a92"/>
                <path d="M821.5 166v190M823.500 166v190" stroke="#a8d8a0"/>
                <path d="M822.5 166v189M822.500 716v39M822.500 793v177M1888.500 412v58M1888.500 578v177M1888.500 793v177" stroke="#e01010"/>
                <path d="M822.5 755v38M822.500 970v39M1888.500 570v8M1888.500 755v38M1888.500 970v39M804 727l36-35M1871 727l36-35" stroke="#007000"/>
            </g>
            <!-- rebar -->
            <g fill="none" stroke="#ffff32" stroke-width="3">
                <path d="M661.5 166v190M975.500 166v190M1341.500 166v328M1761.500 166v328"/>
                <path d="M639 341.500h-11.500V356M1017 341.500h-11.500V356M1358 341.500h-10.500V493.500H1358M1692 341.500h-10.500V493.500H1692"/>
            </g>
            <path d="M648 316.500h-18.500V356M1026 316.500h-18.500V356M1368 316.500h-18.500V671M1702 316.500h-18.500V671M1273.500 262v94" fill="none" stroke="#e01010"/>
            <path d="M1438.5 472v101M1451.500 472v524M963.500 716v280M555 995.500h408M1043 995.500h408M1733 995.500h187" stroke="#ccc" fill="none"/>
            <rect x="1825.5" y="468.5" width="100" height="102" fill="#808080" stroke="#d000d0"/>
            <path d="M1826 519.500h94M1888.500 469v71M1888.500 557v2" stroke="#e01010"/>
            <g fill="none" stroke="#fff" shape-rendering="auto">
                <circle cx="650.5" cy="995.5" r="95"/>
                <circle cx="1138.5" cy="995.5" r="95"/>
                <circle cx="1828" cy="995.5" r="95"/>
            </g>
            <g fill="none" stroke="#0a800a" shape-rendering="auto">
                <circle cx="822" cy="178" r="12"/><circle cx="1888" cy="178" r="12"/>
                <circle cx="475" cy="519" r="12"/><circle cx="1906" cy="519" r="12"/>
                <circle cx="822" cy="997" r="12"/><circle cx="1888" cy="997" r="12"/>
            </g>
            <g class="mark">
                <text x="822" y="184">4-3</text><text x="1890" y="184">4-4</text>
                <text x="475" y="525">4-A</text><text x="1906" y="525">4-A</text>
                <text x="822" y="1003">4-3</text><text x="1888" y="1003">4-4</text>
                <text x="1356" y="811">8400</text>
            </g>
            <!-- drawing notes -->
            <g class="note teal">
                <text transform="translate(614 439) rotate(-90)">C12@100</text>
                <text transform="translate(993 439) rotate(-90)">C12@100</text>
                <text transform="translate(1334 439) rotate(-90)">C12@100</text>
                <text transform="translate(1667 439) rotate(-90)">C12@100</text>
                <text transform="translate(1394 421) rotate(-90)">1200</text>
                <text transform="translate(1728 421) rotate(-90)">1200</text>
            </g>
            <text class="note beam" x="1277" y="288">KL13(6)</text>
            <text class="note size" x="1277" y="325">400x800</text>
            <g class="note axisno"><text x="638" y="979">4</text><text x="1116" y="979">3a</text><text x="1806" y="979">4a</text></g>
            <g class="note wall"><text x="819" y="984">SW-4-</text><text x="1306" y="984">SW-4-</text></g>
            <!-- ucs -->
            <g shape-rendering="auto">
                <path d="M510 957V940h-4l5.500-11 5.500 11h-4v17z" fill="#0f0"/>
                <path d="M514 957.500h16v-4l12 5.500-12 5.500v-4h-16z" fill="#f00"/>
                <circle cx="511.5" cy="959" r="5" fill="#00c"/>
                <text class="ucs" x="512" y="927" fill="#0f0">Y</text><text class="ucs" x="548" y="964" fill="#f00">X</text>
            </g>
        </svg>

        <div class="views">
            <button title="动态观察"><svg><use href="#v-orbit"/></svg></button>
            <button title="三维" class="td"><svg><use href="#v-box"/></svg><b>3D</b></button>
            <button title="俯视"><svg><use href="#v-boxtop"/></svg></button>
            <i class="caret"></i>
            <button title="实体"><svg><use href="#v-boxfill"/></svg></button>
            <i class="caret"></i>
            <button title="全屏"><svg><use href="#v-full"/></svg></button>
            <button title="局部三维"><svg><use href="#v-local"/></svg></button>
            <hr>
            <button title="显示设置"><svg><use href="#v-set"/></svg></button>
        </div>
    </div>
</main>

<footer class="status"><i class="a"></i><i class="a w"></i><i></i><i class="w"></i><i class="w"></i><i class="a"></i><i></i></footer>

<div class="dialog" role="dialog" aria-labelledby="dlg-title">
    <div class="dhead"><h2 id="dlg-title">编辑其它钢筋</h2><button title="关闭"><svg viewBox="0 0 12 12"><path d="M1 1l10 10M11 1L1 11" stroke="#777" fill="none"/></svg></button></div>
    <p>其它钢筋列表：</p>
    <div class="frame">
        <table class="dtable">
            <colgroup><col class="d-no"><col class="d-id"><col class="d-id"><col class="d-pic"><col class="d-shape"><col class="d-pic"><col class="d-len"></colgroup>
            <thead><tr><th></th><th class="on">筋号</th><th>钢筋信息</th><th>图号</th><th>钢筋图形</th><th>根数</th><th>长度(mm)</th></tr></thead>
            <tbody>
                <tr class="tall"><th class="on">1</th><td class="cur">1</td><td><span class="bar"><svg viewBox="0 0 9 11"><path d="M4.5 0v11M0 8.500h9M1 2.500h7v4H1z" fill="none" stroke="#333"/></svg>10</span></td><td>609</td>
                    <td class="shape"><svg viewBox="0 0 200 51"><path d="M38.5 43V30h138V11" fill="none" stroke="#000" stroke-width="2"/><text x="108" y="24" class="r">1500</text><text x="26" y="41">160</text><text x="188" y="26">160</text></svg></td><td>1</td><td>1820</td></tr>
                <tr><th>2</th><td>2</td><td><span class="bar"><svg viewBox="0 0 9 11"><path d="M4.5 0v11M0 8.500h9M1 2.500h7v4H1z" fill="none" stroke="#333"/></svg>8</span></td><td>1</td>
                    <td class="shape"><svg viewBox="0 0 200 35"><path d="M17 25h180" fill="none" stroke="#000" stroke-width="2"/><text x="109" y="20" class="r">1100</text></svg></td><td>1</td><td>1100</td></tr>
                <tr><th>3</th><td></td><td></td><td></td><td></td><td></td><td></td></tr>
            </tbody>
        </table>
    </div>
    <div class="dfoot"><button>插入</button><button>删除</button><button class="ok">确定</button><button>取消</button></div>
    <svg class="grip" viewBox="0 0 8 8"><path d="M6 0h2v2H6zM3 3h2v2H3zM6 3h2v2H6zM0 6h2v2H0zM3 6h2v2H3zM6 6h2v2H6z" fill="#888"/></svg>
</div>

</body>
</html>
```

FILE: styles.css
```css
* {
    box-sizing: border-box;
}

body {
    margin: 0;
    height: 100vh;
    overflow: hidden;
    display: flex;
    flex-direction: column;
    font-family: "Noto Sans", "Noto Sans CJK SC", sans-serif;
    font-size: 12px;
    line-height: 16px;
    color: #333;
    background: #fff;
}

button, input, select {
    font: inherit;
    color: inherit;
    border: 0;
    padding: 0;
    margin: 0;
    background: none;
}

button {
    display: inline-flex;
    align-items: center;
    justify-content: center;
    white-space: nowrap;
}

a {
    color: inherit;
    text-decoration: none;
}

svg {
    display: block;
    width: 16px;
    height: 16px;
    flex: none;
}

ul, h1, h2, p {
    margin: 0;
    padding: 0;
    font-size: 12px;
    font-weight: normal;
    list-style: none;
}

.sprite {
    position: absolute;
    width: 0;
    height: 0;
}

/* icon strokes */
.k { fill: none; stroke: #4c5468; }
.b { fill: none; stroke: #1a73e8; }
.g { fill: none; stroke: #b4b4b4; }
.bf { fill: #cfe2fb; stroke: #1a73e8; }
.bs { fill: #1a73e8; }
.ks { fill: #4c5468; }
.wf { fill: #fff; }
.lf { fill: #dbe9fb; }
.thick { stroke-width: 2; }

.caret {
    flex: none;
    width: 0;
    height: 0;
    border: 3px solid transparent;
    border-top: 4px solid #888;
    border-bottom: 0;
}

/* ---------- header ---------- */
.header {
    display: grid;
    grid-template-columns: 49px 1fr;
    grid-template-rows: 20px 21px;
    border-bottom: 1px solid #eee;
}

.logo {
    grid-area: 1 / 1 / 3 / 2;
    padding: 3px 0 0 8px;
}

.logo svg {
    width: 30px;
    height: 30px;
}

.corner {
    display: block;
    width: 0;
    margin-left: 30px;
    border-left: 5px solid transparent;
    border-bottom: 5px solid #777;
}

.titlebar {
    grid-area: 1 / 1 / 2 / 3;
    display: grid;
    grid-template-columns: 1fr auto 1fr;
    align-items: center;
}

.quick {
    display: flex;
    align-items: center;
    gap: 10px;
    padding-left: 54px;
}

.quick .caret {
    border-width: 4px 2px 0;
    border-top-color: #555;
}

.quick .pull { margin-left: -5px; }
.quick .light { border-top-color: #bbb; }

.quick .bar {
    width: 7px;
    height: 8px;
    border-width: 4px 3px 0;
}

.win {
    display: flex;
    justify-content: flex-end;
    gap: 24px;
    padding-right: 13px;
}

.win svg {
    width: 12px;
    height: 12px;
}

.tabs {
    grid-area: 2 / 2 / 3 / 3;
    display: flex;
    align-items: center;
}

.tabs > a {
    padding: 2px 13px;
    border-radius: 10px;
    white-space: nowrap;
}

.tabs > .on {
    color: #fff;
    background: #1890ff;
}

.account {
    display: flex;
    align-items: center;
    margin-left: auto;
    padding-right: 6px;
    gap: 8px;
}

.ask {
    position: relative;
    display: flex;
    align-items: center;
    width: 320px;
    height: 18px;
    border: 1px solid #ddd;
    border-radius: 2px;
    color: #000;
}

.ask input {
    flex: 1;
    text-indent: -6px;
}

.ask svg {
    width: 12px;
    height: 12px;
    margin: 0 6px;
}

.bubble {
    position: absolute;
    z-index: 2;
    right: calc(100% + 10px);
    top: -9px;
    width: 180px;
    height: 34px;
    padding-left: 7px;
    line-height: 34px;
    border-radius: 3px;
    white-space: nowrap;
    color: #fff;
    background: #0b92ff;
}

.bubble::after {
    content: "";
    position: absolute;
    left: 100%;
    top: 13px;
    border: 4px solid transparent;
    border-left-color: #0b92ff;
    border-right: 0;
}

.user {
    display: flex;
    width: 74px;
}

.help {
    gap: 1px;
    font-size: 14px;
}

.help .caret {
    border-width: 4px 2px 0;
}

/* ---------- ribbon ---------- */
.ribbon {
    display: flex;
    height: 98px;
    padding: 1px 0 4px;
    border-bottom: 1px solid #d9d9d9;
}

.group {
    display: flex;
    flex-direction: column;
    justify-content: space-between;
    padding: 0 14px 0 8px;
    border-right: 1px solid #dcdcdc;
}

.tools {
    display: flex;
    gap: 5px;
}

.grid {
    display: grid;
    grid-auto-flow: column;
    grid-template-rows: 24px 24px 24px;
    grid-auto-columns: max-content;
    column-gap: 12px;
}

.grid button {
    justify-content: flex-start;
    gap: 3px;
}

.grid .caret {
    margin: 0 -4px 0 2px;
}

button:disabled {
    color: #b0b0b0;
}

.big {
    flex-direction: column;
    justify-content: flex-start;
    gap: 4px;
    padding: 5px 8px 0;
}

.big svg {
    width: 28px;
    height: 30px;
}

.narrow svg {
    width: 24px;
}

.big .caret {
    margin-top: 2px;
}

.name {
    display: flex;
    align-items: center;
    justify-content: center;
    gap: 6px;
    line-height: 18px;
}

.wide {
    padding: 0;
}

.wide .big {
    padding: 5px 8px 0;
}

.wide .name {
    padding: 0 15px;
}

.draw {
    padding: 0 6px;
}

.draw .grid {
    column-gap: 10px;
}

.draw .grid button {
    align-self: center;
    width: 22px;
    height: 20px;
    padding: 0 3px;
    border-radius: 2px;
}

.draw .grid .on {
    background: #c2d9f1;
}

/* ---------- options bar ---------- */
.options {
    display: flex;
    align-items: center;
    gap: 3px;
    height: 26px;
    padding: 0 2px;
    background: #f1f1f1;
}

.options select {
    width: 99px;
    height: 22px;
    padding: 0 3px;
    appearance: none;
    border: 1px solid #dcdcdc;
    border-radius: 3px;
    background: #fff url("data:image/svg+xml,%3Csvg xmlns='http://www.w3.org/2000/svg' width='6' height='4'%3E%3Cpath d='M0 0h6L3 4z' fill='%23555'/%3E%3C/svg%3E") no-repeat right 4px center;
}

.options .short {
    width: 58px;
}

.options label {
    display: flex;
    align-items: center;
    color: #888;
}

.spin {
    position: relative;
    width: 61px;
    height: 22px;
    margin: 0 1px 0 3px;
    border: 1px solid #dcdcdc;
    border-radius: 3px;
    background: #fff;
}

.spin input {
    width: 44px;
    height: 20px;
    padding: 0 2px;
}

.spin::before, .spin::after {
    content: "";
    position: absolute;
    right: 4px;
    top: 4px;
    border: 2px solid transparent;
    border-top: 0;
    border-bottom: 3px solid #444;
}

.spin::after {
    top: 14px;
    border-top: 3px solid #444;
    border-bottom: 0;
}

/* ---------- side panels ---------- */
.main {
    flex: 1;
    min-height: 0;
    display: flex;
}

.panel {
    display: flex;
    flex-direction: column;
    min-height: 0;
    overflow: hidden;
    border: 1px solid #d6d6d6;
}

.strip {
    flex: none;
    display: flex;
    justify-content: flex-end;
    height: 11px;
    padding-right: 1px;
    background: #e6e6e6;
}

.strip svg {
    width: 12px;
    height: 12px;
}

.nav {
    width: 180px;
}

.nav h2 {
    height: 22px;
    padding-left: 8px;
    line-height: 20px;
    border-top: 1px solid #d6d6d6;
    color: #777;
    background: #f1f1f1;
}

.navbar {
    display: flex;
    align-items: center;
    gap: 4px;
    height: 28px;
    padding-left: 1px;
    border-top: 1px solid #d6d6d6;
    border-bottom: 1px solid #d6d6d6;
}

.navbar button {
    width: 24px;
    height: 22px;
    border-radius: 3px;
}

.navbar .on {
    background: #c2d9f1;
}

.scroll {
    flex: 1;
    min-height: 0;
    display: flex;
}

.menu {
    flex: 1;
    padding-top: 4px;
}

.menu li {
    height: 25px;
    margin-bottom: 3px;
    line-height: 25px;
}

.cat {
    padding-left: 3px;
    background: #ebebeb;
}

.menu a {
    position: relative;
    display: flex;
    align-items: center;
    gap: 14px;
    height: 25px;
    padding-left: 17px;
}

.menu svg {
    width: 18px;
    height: 18px;
}

.menu .on {
    background: #d4e7fd;
}

.menu .dot::before {
    content: "";
    position: absolute;
    left: 39px;
    top: 1px;
    width: 6px;
    height: 6px;
    border-radius: 50%;
    background: #f00;
}

.vbar {
    width: 14px;
    padding: 53px 3px 0;
}

.vbar i {
    display: block;
    height: 67%;
    border-radius: 4px;
    background: #cacaca;
}

.middle {
    display: flex;
    flex-direction: column;
    gap: 4px;
    width: 274px;
    margin-left: 4px;
}

.comps {
    flex: 413;
}

.props {
    flex: 425;
}

.ptabs {
    flex: none;
    display: flex;
    height: 23px;
    border-top: 1px solid #d6d6d6;
    border-bottom: 1px solid #ccc;
    background: #f1f1f1;
}

.ptabs button {
    padding: 0 8px;
    border-right: 1px solid #c8c8c8;
    font-weight: bold;
    color: #888;
    background: #e0e0e0;
}

.ptabs .on {
    color: #333;
    background: #f1f1f1;
}

.ptools {
    flex: none;
    display: flex;
    align-items: center;
    justify-content: space-between;
    height: 28px;
    padding: 0 1px 0 4px;
    border-bottom: 1px solid #ddd;
}

.ptools button {
    gap: 4px;
}

.ptools .caret {
    margin-left: 2px;
    border-width: 4px 2px 0;
}

.ptools .more {
    width: 12px;
    height: 18px;
    border: 1px solid #e2e2e2;
    border-radius: 3px;
}

.more svg {
    width: 8px;
    height: 6px;
}

.psearch {
    flex: none;
    display: flex;
    align-items: center;
    height: 19px;
    padding: 0 6px 0 2px;
    border-bottom: 1px solid #ddd;
}

.psearch input {
    flex: 1;
}

.psearch svg {
    width: 12px;
    height: 12px;
}

::placeholder {
    color: #999;
    opacity: 1;
}

.tree {
    flex: 1;
    padding-top: 3px;
    white-space: nowrap;
}

.root {
    display: flex;
    align-items: center;
    gap: 4px;
    height: 23px;
    padding-left: 13px;
}

.tree li {
    height: 21px;
    margin: 2px 0 3px 40px;
    padding-left: 3px;
    line-height: 21px;
}

.tree .on {
    border-radius: 3px 0 0 3px;
    background: #c2d9f1;
}

.hbar {
    display: flex;
    align-items: center;
    gap: 4px;
    height: 16px;
    padding: 0 5px;
}

.hbar i {
    flex: 1;
    height: 8px;
    margin-right: 2px;
    border-radius: 4px;
    background: #cacaca;
}

.hbar b {
    border: 4px solid transparent;
    border-left: 0;
    border-right: 5px solid #4c5468;
}

.hbar .r {
    border-right: 0;
    border-left: 5px solid #4c5468;
}

.ptable {
    width: 256px;
    table-layout: fixed;
    border-collapse: collapse;
    align-self: flex-start;
}

.c-no { width: 22px; }
.c-name { width: 100px; }
.c-val { width: 93px; }
.c-add { width: 41px; }

.ptable th, .ptable td {
    height: 21px;
    padding: 0 3px;
    border: 1px solid #d2d2d2;
    border-left: 0;
    border-top: 0;
    font-weight: normal;
    text-align: left;
    white-space: nowrap;
}

.ptable th {
    padding: 0;
    text-align: center;
}

.ptable tbody th {
    color: #555;
    background: #f1f1f1;
}

.ptable th.on, .ptable .on th {
    font-weight: bold;
    color: #fff;
    background: #80bbfb;
}

.ptable td:last-child {
    text-align: center;
}

.ptable .link {
    color: #1a5cff;
}

.ptable [type=checkbox] {
    display: block;
    width: 14px;
    height: 14px;
    margin: 0 auto;
    appearance: none;
    border: 1px solid #888;
    border-radius: 2px;
    background: #fff;
}

.fold button {
    width: 13px;
    height: 13px;
    margin: 0 6px 0 -1px;
    line-height: 11px;
    border: 1px solid #888;
    border-radius: 2px;
    vertical-align: middle;
}

.ptable .sub {
    padding-left: 31px;
    background:
        linear-gradient(#ddd, #ddd) 8px 0 / 1px 100% no-repeat,
        linear-gradient(#ddd, #ddd) 8px 10px / 16px 1px no-repeat;
}

.ptable .edit {
    padding: 0;
}

.edit div {
    display: flex;
    align-items: center;
    height: 20px;
    padding: 0 3px;
    border: 2px solid #5b9fe8;
}

.edit input {
    flex: 1;
    min-width: 0;
}

.edit button {
    width: 16px;
    height: 12px;
    font-size: 7px;
    line-height: 10px;
    color: #1a73e8;
    border: 1px solid #5b9fe8;
    border-radius: 2px;
    background: #e6f1fd;
}

.props .vbar {
    width: 16px;
    padding: 48px 4px 0;
}

.props .vbar i {
    height: 60%;
}

.splitter {
    display: flex;
    width: 4px;
    padding-top: 372px;
}

.splitter button {
    width: 4px;
    height: 100px;
    background: #5a6475;
}

/* ---------- drawing ---------- */
.stage {
    position: relative;
    flex: 1;
    min-width: 0;
    background: #000;
}

.cad {
    width: 100%;
    height: 100%;
}

.mark {
    font-size: 17px;
    fill: #fff;
    text-anchor: middle;
}

.note {
    font-family: Roboto, Inter, sans-serif;
    font-weight: 100;
}

.teal {
    font-size: 28px;
    font-weight: 300;
    fill: #009a9a;
}

.beam {
    font-size: 28px;
    font-weight: 300;
    fill: #16f016;
}

.size {
    font-size: 28px;
    font-weight: 300;
    fill: #fff;
}

.axisno {
    font-size: 52px;
    fill: #fff;
}

.wall {
    font-size: 44px;
    fill: #fff;
}

.ucs {
    font-size: 14px;
    text-anchor: middle;
}

.views {
    position: absolute;
    top: 1px;
    right: 0;
    display: flex;
    flex-direction: column;
    align-items: center;
    gap: 9px;
    width: 32px;
    padding: 12px 0 13px;
    border-radius: 4px;
    background: #fff;
}

.views svg {
    width: 20px;
    height: 20px;
}

.views .caret {
    margin: -2px 0 -1px;
    border-top-color: #4c5468;
}

.views hr {
    width: 24px;
    margin: -2px 0;
    border: 0;
    border-top: 1px solid #4c5468;
}

.td {
    position: relative;
}

.td b {
    position: absolute;
    left: 3px;
    bottom: 2px;
    font-size: 8px;
    line-height: 10px;
    color: #1a73e8;
}

.status {
    display: flex;
    align-items: flex-end;
    gap: 8px;
    height: 4px;
    padding-left: 425px;
    background: #fafafa;
}

.status i {
    width: 22px;
    height: 2px;
    background: #aaa;
}

.status .w { width: 32px; }
.status .a { background: #1a73e8; }

/* ---------- dialog ---------- */
.dialog {
    position: absolute;
    z-index: 5;
    left: calc(50% - 335px);
    top: 354px;
    width: 672px;
    padding: 0 11px 10px;
    border: 1px solid #bbb;
    background: #fff;
}

.dhead {
    display: flex;
    align-items: center;
    justify-content: space-between;
    height: 38px;
}

.dhead h2 {
    font-size: 14px;
}

.dhead svg {
    width: 12px;
    height: 12px;
}

.dialog p {
    line-height: 20px;
    padding-bottom: 4px;
}

.frame {
    height: 256px;
    border: 1px solid #bdbdbd;
}

.dtable {
    width: 616px;
    table-layout: fixed;
    border-collapse: collapse;
}

.d-no { width: 22px; }
.d-id { width: 81px; }
.d-pic { width: 65px; }
.d-shape { width: 201px; }
.d-len { width: 101px; }

.dtable th, .dtable td {
    height: 36px;
    padding: 0 3px;
    border: 1px solid #d2d2d2;
    border-top: 0;
    border-left: 0;
    font-weight: normal;
    text-align: left;
}

.dtable th {
    text-align: center;
    border-color: #bdbdbd;
    background: #f0f0f0;
}

.dtable thead th {
    height: 20px;
}

.dtable .tall td {
    height: 51px;
}

.dtable th.on {
    font-weight: bold;
    color: #fff;
    background: #80bbfb;
}

.dtable .cur {
    background: #d6eaff;
    box-shadow: inset -1px -1px #808080;
    border-color: #808080;
}

.bar {
    display: flex;
    align-items: center;
    gap: 1px;
}

.bar svg {
    width: 9px;
    height: 11px;
    margin: 0 0 3px 1px;
}

.dtable .shape {
    padding: 0;
}

.shape svg {
    width: 100%;
    height: auto;
}

.shape text {
    font-size: 12px;
    text-anchor: middle;
}

.shape .r {
    fill: #f00;
}

.dfoot {
    display: flex;
    gap: 6px;
    padding-top: 6px;
}

.dfoot button {
    width: 80px;
    height: 26px;
    border: 1px solid #c6c6c6;
    border-radius: 3px;
}

.dfoot .ok {
    margin-left: auto;
    color: #fff;
    border-color: #2b7fe3;
    background: #2b7fe3;
}

.grip {
    position: absolute;
    right: 3px;
    bottom: 3px;
    width: 8px;
    height: 8px;
}
```
